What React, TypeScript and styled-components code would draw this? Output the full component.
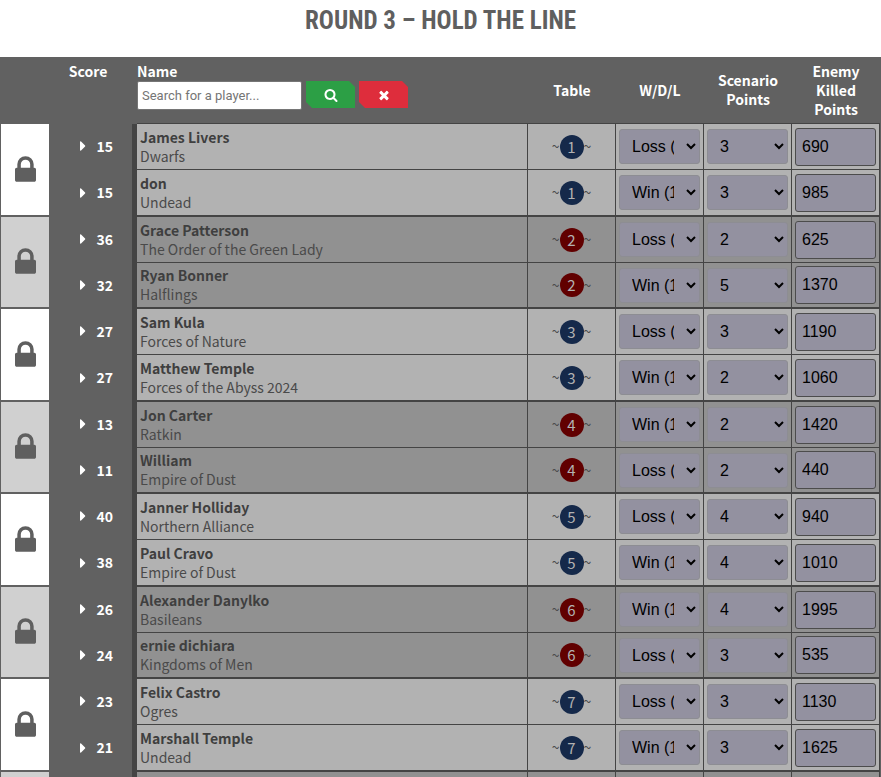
import React from "react";
import styled, { createGlobalStyle } from "styled-components";
import { FaCaretRight } from "react-icons/fa";

const GlobalStyle = createGlobalStyle`
  *, *::before, *::after { box-sizing: border-box; }
  html, body { margin: 0; background: #fff; }
  html { overflow: hidden; }
  body {
    color: #3f3f3f;
    font-family: "Noto Sans CJK SC", "Source Sans Pro", sans-serif;
    font-size: 14px;
    line-height: 19px;
  }
`;

const Title = styled.h1`
  margin: 0;
  padding-top: 4px;
  height: 57px;
  text-align: center;
  color: #5f5f5f;
  font-family: "Liberation Sans Narrow", "Roboto Condensed", "Liberation Sans", sans-serif;
  font-size: 25px;
  font-weight: 700;
  line-height: 34px;
  text-transform: uppercase;
`;

const Pairings = styled.table`
  width: 100%;
  table-layout: fixed;
  border-collapse: separate;
  border-spacing: 0;
  background: #616161;
  border-left: 1px solid #616161;
  border-right: 1px solid #616161;
`;

const Col = styled.col<{ $width?: number }>`
  width: ${(p) => (p.$width ? `${p.$width}px` : "auto")};
`;

const Head = styled.th<{ $top?: boolean; $left?: boolean; $plain?: boolean }>`
  height: 67px;
  padding: ${(p) => (p.$left ? "5px 0 0" : p.$top ? "5px 10px 0 0" : "0 8px")};
  border-bottom: 1px solid ${(p) => (p.$plain ? "#616161" : "#444")};
  color: #fff;
  font-weight: 700;
  text-align: ${(p) => (p.$left ? "left" : "center")};
  vertical-align: ${(p) => (p.$top ? "top" : "middle")};
`;

const SearchForm = styled.form`
  display: flex;
  align-items: flex-start;
  gap: 4px;
`;

const SearchInput = styled.input`
  width: 165px;
  height: 29px;
  padding: 0 4px;
  border: 1px solid #767676;
  border-radius: 2px;
  background: #fff;
  font-family: Roboto, sans-serif;
  font-size: 13px;
  &::placeholder { color: #757575; }
`;

const ActionButton = styled.button<{ $color: string }>`
  display: flex;
  align-items: center;
  justify-content: center;
  width: 49px;
  height: 27px;
  padding: 0;
  border: 0;
  background: ${(p) => p.$color};
  color: #fff;
  clip-path: polygon(0 0, calc(100% - 6px) 0, 100% 6px, 100% 100%, 6px 100%, 0 calc(100% - 6px));
`;

const Row = styled.tr<{ $height: number }>`
  height: ${(p) => p.$height}px;
`;

const LockCell = styled.td<{ $dark: boolean }>`
  padding: 0 0 2px;
  border-bottom: 2px solid #616161;
  background: ${(p) => (p.$dark ? "#d0d0d0" : "#fff")};
  color: #5f5f5f;
  vertical-align: middle;
  svg { display: block; margin: 0 auto; }
`;

const ScoreCell = styled.td`
  padding: 0 19px 2px 0;
  border-right: 5px solid #444;
  color: #fff;
  font-weight: 700;
`;

const ScoreToggle = styled.button`
  display: flex;
  align-items: center;
  justify-content: flex-end;
  gap: 5px;
  width: 100%;
  padding: 0;
  border: 0;
  background: none;
  color: inherit;
  font: inherit;
`;

const Cell = styled.td<{ $dark: boolean; $last: boolean }>`
  padding: 0 3px;
  border-right: 1px solid #444;
  border-bottom: ${(p) => (p.$last ? 2 : 1)}px solid #444;
  background: ${(p) => (p.$dark ? "#919191" : "#b2b2b2")};
  vertical-align: middle;
  overflow: hidden;
`;

const Player = styled.div`
  font-weight: 700;
`;

const Army = styled.div`
  color: #4a4a4a;
`;

const TableMark = styled.div`
  display: flex;
  align-items: center;
  justify-content: center;
  color: #4a4a4a;
`;

const Badge = styled.span<{ $red: boolean }>`
  width: 24px;
  height: 24px;
  border-radius: 50%;
  background: ${(p) => (p.$red ? "#610000" : "#15294a")};
  color: #b2b2b2;
  font-size: 15px;
  line-height: 24px;
  text-align: center;
`;

const Select = styled.select`
  display: block;
  width: 100%;
  height: 35px;
  padding: 0 9px 0 8px;
  border: 1px solid #8d8d93;
  border-radius: 3px;
  background-color: #9391a0;
  color: #000;
  font-family: "Liberation Sans", Arial, sans-serif;
  font-size: 16px;
`;

const PointsInput = styled.input`
  display: block;
  width: 100%;
  height: 38px;
  padding: 0 6px;
  border: 1px solid #4c4c4c;
  border-radius: 3px;
  background: #9391a0;
  color: #000;
  font-family: "Liberation Sans", Arial, sans-serif;
  font-size: 16px;
`;

const Filler = styled.td<{ $bg: string; $edge?: "wide" | "thin" }>`
  height: 5px;
  padding: 0;
  background: ${(p) => p.$bg};
  border-right: ${(p) => (p.$edge === "wide" ? "5px" : p.$edge === "thin" ? "1px" : "0")} solid #444;
`;

const LockIcon = () => (
  <svg width="21" height="26" viewBox="0 128 1152 1408" fill="currentColor" role="img" aria-label="Locked">
    <path d="M320 768h512v-192q0-106-75-181t-181-75-181 75-75 181v192zM1152 864v576q0 40-28 68t-68 28h-960q-40 0-68-28t-28-68v-576q0-40 28-68t68-28h32v-192q0-184 132-316t316-132 316 132 132 316v192h32q40 0 68 28t28 68z" />
  </svg>
);

const SearchIcon = () => (
  <svg width="14" height="14" viewBox="0 0 1792 1792" fill="currentColor" aria-hidden="true">
    <path d="M1216 832q0-185-131.5-316.5t-316.5-131.5-316.5 131.5-131.5 316.5 131.5 316.5 316.5 131.5 316.5-131.5 131.5-316.5zm512 832q0 52-38 90t-90 38q-54 0-90-38l-343-342q-179 124-399 124-143 0-273.5-55.5t-225-150-150-225-55.5-273.5 55.5-273.5 150-225 225-150 273.5-55.5 273.5 55.5 225 150 150 225 55.5 273.5q0 220-124 399l343 343q37 37 37 90z" />
  </svg>
);

const ClearIcon = () => (
  <svg width="14" height="14" viewBox="0 0 1792 1792" fill="currentColor" aria-hidden="true">
    <path d="M1490 1322q0 40-28 68l-136 136q-28 28-68 28t-68-28l-294-294-294 294q-28 28-68 28t-68-28l-136-136q-28-28-28-68t28-68l294-294-294-294q-28-28-28-68t28-68l136-136q28-28 68-28t68 28l294 294 294-294q28-28 68-28t68 28l136 136q28 28 28 68t-28 68l-294 294 294 294q28 28 28 68z" />
  </svg>
);

type Entry = { score: number; name: string; army: string; result: "Loss (0)" | "Win (1)"; scenario: number; killed: number };

const e = (score: number, name: string, army: string, win: boolean, scenario: number, killed: number): Entry => ({
  score, name, army, result: win ? "Win (1)" : "Loss (0)", scenario, killed,
});

const pairings: Entry[][] = [
  [e(15, "James Livers", "Dwarfs", false, 3, 690), e(15, "don", "Undead", true, 3, 985)],
  [e(36, "Grace Patterson", "The Order of the Green Lady", false, 2, 625), e(32, "Ryan Bonner", "Halflings", true, 5, 1370)],
  [e(27, "Sam Kula", "Forces of Nature", false, 3, 1190), e(27, "Matthew Temple", "Forces of the Abyss 2024", true, 2, 1060)],
  [e(13, "Jon Carter", "Ratkin", true, 2, 1420), e(11, "William", "Empire of Dust", false, 2, 440)],
  [e(40, "Janner Holliday", "Northern Alliance", false, 4, 940), e(38, "Paul Cravo", "Empire of Dust", true, 4, 1010)],
  [e(26, "Alexander Danylko", "Basileans", true, 4, 1995), e(24, "ernie dichiara", "Kingdoms of Men", false, 3, 535)],
  [e(23, "Felix Castro", "Ogres", false, 3, 1130), e(21, "Marshall Temple", "Undead", true, 3, 1625)],
];

export default function App() {
  return (
    <>
      <GlobalStyle />
      <Title>Round 3 – Hold the Line</Title>
      <Pairings>
        <colgroup>
          <Col $width={48} />
          <Col $width={88} />
          <Col />
          <Col $width={88} />
          <Col $width={88} />
          <Col $width={88} />
          <Col $width={88} />
        </colgroup>
        <thead>
          <tr>
            <Head $plain aria-label="Locked" />
            <Head $plain $top>Score</Head>
            <Head $top $left>
              Name
              <SearchForm onSubmit={(ev) => ev.preventDefault()}>
                <SearchInput type="text" aria-label="Search for a player" placeholder="Search for a player..." />
                <ActionButton type="submit" $color="#2c9f45" aria-label="Search"><SearchIcon /></ActionButton>
                <ActionButton type="reset" $color="#de2d3c" aria-label="Clear"><ClearIcon /></ActionButton>
              </SearchForm>
            </Head>
            <Head>Table</Head>
            <Head>W/D/L</Head>
            <Head>Scenario Points</Head>
            <Head>Enemy Killed Points</Head>
          </tr>
        </thead>
        <tbody>
          {pairings.map((pair, i) =>
            pair.map((p, j) => {
              const dark = i % 2 === 1;
              const shade = { $dark: dark, $last: j === 1 };
              return (
                <Row key={p.name} $height={j === 1 && !dark ? 47 : 46}>
                  {j === 0 && (
                    <LockCell rowSpan={2} $dark={dark}><LockIcon /></LockCell>
                  )}
                  <ScoreCell>
                    <ScoreToggle type="button"><FaCaretRight size={16} />{p.score}</ScoreToggle>
                  </ScoreCell>
                  <Cell {...shade}>
                    <Player>{p.name}</Player>
                    <Army>{p.army}</Army>
                  </Cell>
                  <Cell {...shade}>
                    <TableMark>~<Badge $red={dark}>{i + 1}</Badge>~</TableMark>
                  </Cell>
                  <Cell {...shade}>
                    <Select aria-label={`Result for ${p.name}`} defaultValue={p.result}>
                      <option>Loss (0)</option>
                      <option>Draw (0.5)</option>
                      <option>Win (1)</option>
                    </Select>
                  </Cell>
                  <Cell {...shade}>
                    <Select aria-label={`Scenario points for ${p.name}`} defaultValue={p.scenario}>
                      {[0, 1, 2, 3, 4, 5].map((n) => <option key={n}>{n}</option>)}
                    </Select>
                  </Cell>
                  <Cell {...shade}>
                    <PointsInput type="text" aria-label={`Enemy killed points for ${p.name}`} defaultValue={p.killed} />
                  </Cell>
                </Row>
              );
            })
          )}
          <tr aria-hidden="true">
            <Filler $bg="#d0d0d0" />
            <Filler $bg="#616161" $edge="wide" />
            {[0, 1, 2, 3, 4].map((n) => <Filler key={n} $bg="#919191" $edge="thin" />)}
          </tr>
        </tbody>
      </Pairings>
    </>
  );
}
